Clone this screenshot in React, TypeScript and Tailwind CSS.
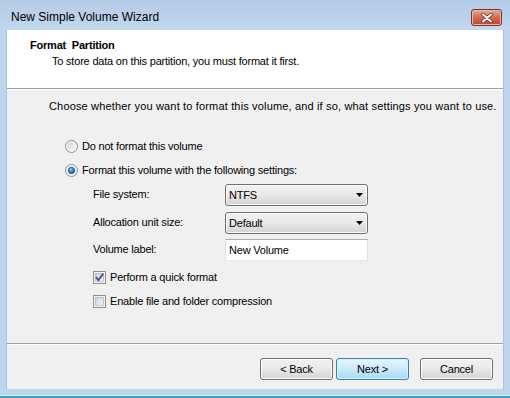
import type { ReactNode } from 'react';

function Radio({ checked }: { checked?: boolean }) {
  return (
    <svg width="13" height="13" viewBox="0 0 13 13" className="shrink-0">
      <defs>
        <linearGradient id={checked ? 'rOn' : 'rOff'} x1="0" y1="0" x2="1" y2="1">
          <stop offset="0" stopColor="#d4d4d4" />
          <stop offset="1" stopColor="#fbfbfb" />
        </linearGradient>
        <radialGradient id="rDot" cx="0.4" cy="0.35" r="0.7">
          <stop offset="0" stopColor="#8fd8fb" />
          <stop offset="0.5" stopColor="#2f8fd4" />
          <stop offset="1" stopColor="#1b4f86" />
        </radialGradient>
      </defs>
      <circle cx="6.5" cy="6.5" r="6" fill="#f4f4f4" stroke="#8f9091" />
      <circle cx="6.5" cy="6.5" r="4.3" fill={`url(#${checked ? 'rOn' : 'rOff'})`} />
      {checked && <circle cx="6.5" cy="6.5" r="3.2" fill="url(#rDot)" stroke="#1d4a79" strokeWidth="0.6" />}
    </svg>
  );
}

function Checkbox({ checked }: { checked?: boolean }) {
  return (
    <svg width="13" height="13" viewBox="0 0 13 13" className="shrink-0">
      <defs>
        <linearGradient id="cbFill" x1="0" y1="0" x2="1" y2="1">
          <stop offset="0" stopColor="#cbcfd5" />
          <stop offset="1" stopColor="#f7f7f7" />
        </linearGradient>
      </defs>
      <rect x="0.5" y="0.5" width="12" height="12" fill="#f4f4f4" stroke="#8f9091" />
      <rect x="2.5" y="2.5" width="8" height="8" fill="url(#cbFill)" stroke="#b3b7bd" strokeWidth="0.8" />
      {checked && (
        <path d="M3 6.2 L5.4 9.2 L10.2 2.6" fill="none" stroke="#44579a" strokeWidth="1.9" strokeLinejoin="round" />
      )}
    </svg>
  );
}

function Combo({ value }: { value: string }) {
  return (
    <div className="w-[143px] h-[22px] flex items-center justify-between pl-[3px] pr-[4px] rounded-[3px] border border-[#707070] bg-linear-to-b from-[#f2f2f2] via-[#e9e9e9] to-[#d3d3d3] shadow-[inset_0_0_0_1px_#fafafa]">
      <span>{value}</span>
      <svg width="7" height="4" viewBox="0 0 7 4">
        <path d="M0 0 H7 L3.5 4 Z" fill="#000" />
      </svg>
    </div>
  );
}

function Button({ children, primary }: { children: ReactNode; primary?: boolean }) {
  return (
    <div
      className={
        primary
          ? 'w-[73px] h-[22px] flex items-center justify-center rounded-[3px] border border-[#3c7fb1] bg-linear-to-b from-[#eaf6fd] via-[#c9e9fb] to-[#a7d9f5] shadow-[inset_0_0_0_1px_#ccf4ff]'
          : 'w-[73px] h-[22px] flex items-center justify-center rounded-[3px] border border-[#707070] bg-linear-to-b from-[#f2f2f2] via-[#e9e9e9] to-[#d3d3d3] shadow-[inset_0_0_0_1px_#fcfcfc]'
      }
    >
      {children}
    </div>
  );
}

function FormRow({ label, children }: { label: string; children: ReactNode }) {
  return (
    <div className="flex items-center">
      <span className="w-[132px] pb-[2px]">{label}</span>
      {children}
    </div>
  );
}

export default function App() {
  return (
    <div className="w-[510px] h-[398px] flex flex-col bg-[#bed5ee] font-['Liberation_Sans',Arial,sans-serif] text-[11px] leading-[13px] tracking-[-0.2px] text-black overflow-hidden">
      {/* title bar */}
      <div className="h-[30px] flex justify-between pl-[11px] pr-[8px] bg-linear-to-b from-[#b3cae6] to-[#c3d8ef]">
        <span className="pt-[10px] text-[12px] leading-[15px] tracking-normal">New Simple Volume Wizard</span>
        <div className="mt-[9px] w-[31px] h-[17px] flex items-center justify-center rounded-[3px] border border-[#7a3327] bg-linear-to-b from-[#e9a898] via-[#d26a52] to-[#c2402a] shadow-[inset_0_0_0_1px_#f0b7a8]">
          <svg width="12" height="10" viewBox="0 0 12 10">
            <path d="M2 1.5 L10 8.5 M10 1.5 L2 8.5" stroke="#4b3a38" strokeWidth="3.6" strokeLinecap="round" />
            <path d="M2 1.5 L10 8.5 M10 1.5 L2 8.5" stroke="#ffffff" strokeWidth="2" strokeLinecap="round" />
          </svg>
        </div>
      </div>

      {/* dialog body */}
      <div className="flex-1 mx-[6px] flex flex-col border-x border-[#a9c1dd] bg-[#f0f0f0]">
        <div className="h-[58px] bg-white pt-[9px] pl-[23px]">
          <div className="font-bold">Format&nbsp; Partition</div>
          <div className="mt-[3px] pl-[22px]">To store data on this partition, you must format it first.</div>
        </div>
        <div className="h-px bg-[#a0a0a0]" />
        <div className="h-px bg-white" />

        <div className="flex-1 pt-[10px] pl-[42px] flex flex-col">
          <div className="tracking-[0.16px]">Choose whether you want to format this volume, and if so, what settings you want to use.</div>

          <div className="mt-[27px] pl-[16px] flex items-center gap-[4px] h-[13px]">
            <Radio />
            <span>Do not format this volume</span>
          </div>
          <div className="mt-[11px] pl-[16px] flex items-center gap-[4px] h-[13px]">
            <Radio checked />
            <span>Format this volume with the following settings:</span>
          </div>

          <div className="mt-[7px] pl-[44px] flex flex-col">
            <FormRow label="File system:">
              <Combo value="NTFS" />
            </FormRow>
            <div className="mt-[6px]">
              <FormRow label="Allocation unit size:">
                <Combo value="Default" />
              </FormRow>
            </div>
            <div className="mt-[5px]">
              <FormRow label="Volume label:">
                <div className="w-[143px] h-[22px] flex items-center pl-[3px] bg-white border border-[#dbdfe6] border-t-[#abadb3] border-b-[#e3e9ef]">
                  New Volume
                </div>
              </FormRow>
            </div>

            <div className="mt-[10px] flex items-center gap-[4px] h-[13px]">
              <Checkbox checked />
              <span>Perform a quick format</span>
            </div>
            <div className="mt-[11px] flex items-center gap-[4px] h-[13px]">
              <Checkbox />
              <span>Enable file and folder compression</span>
            </div>
          </div>
        </div>

        <div className="h-px bg-[#a0a0a0]" />
        <div className="h-px bg-white" />
        <div className="h-[44px] pt-[13px] pr-[10px] flex justify-end">
          <Button>&lt; Back</Button>
          <div className="ml-[3px] mr-[11px]">
            <Button primary>Next &gt;</Button>
          </div>
          <Button>Cancel</Button>
        </div>
      </div>

      {/* bottom frame */}
      <div className="h-[6px]" />
      <div className="h-px bg-[#e3eef9]" />
      <div className="h-[2px] bg-[#2a9fc7]" />
    </div>
  );
}
